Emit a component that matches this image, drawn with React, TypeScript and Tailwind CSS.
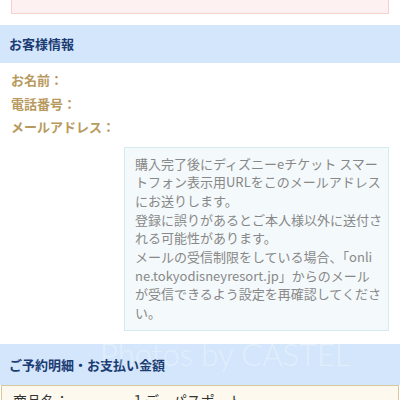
const noteLines = [
  '購入完了後にディズニーeチケット スマー',
  'トフォン表示用URLをこのメールアドレス',
  'にお送りします。',
  '登録に誤りがあるとご本人様以外に送付さ',
  'れる可能性があります。',
  'メールの受信制限をしている場合、「onli',
  'ne.tokyodisneyresort.jp」からのメール',
  'が受信できるよう設定を再確認してくださ',
  'い。',
];

function SectionHeader({
  title,
  className,
  children,
}: {
  title: string;
  className: string;
  children?: React.ReactNode;
}) {
  return (
    <div className={`relative flex items-center bg-[#d3e6fb] px-[9px] ${className}`}>
      <h2 className="text-[13px] font-bold text-[#1b3b73]">{title}</h2>
      {children}
    </div>
  );
}

export default function App() {
  return (
    <div
      className="w-[400px] h-[400px] overflow-hidden bg-white"
      style={{ fontFamily: '"Noto Sans CJK JP", "Noto Sans", sans-serif' }}
    >
      <div className="mx-[11px] h-[14px] border-x border-b border-[#f6cfcf] bg-[#fdf1f1]" />

      <SectionHeader title="お客様情報" className="mt-[11px] h-[38px]" />

      <div className="px-[11px] pt-[5px] text-[13px] font-bold leading-[23.5px] text-[#b89a5e]">
        <p>お名前：</p>
        <p>電話番号：</p>
        <p>メールアドレス：</p>
      </div>

      <div className="ml-[124px] mr-[11px] mt-[8px] border border-[#d6ebef] bg-[#f4f9fb] py-[7px] pl-[10px] text-[13px] leading-[18.7px] text-[#888888]">
        {noteLines.map((line) => (
          <span key={line} className="block whitespace-nowrap">
            {line}
          </span>
        ))}
      </div>

      <SectionHeader title="ご予約明細・お支払い金額" className="mt-[13px] h-[41px]">
        <span
          className="pointer-events-none absolute left-[100px] top-[-13px] text-[31px] font-light text-white/35 whitespace-nowrap"
          style={{ fontFamily: 'Lato, sans-serif' }}
        >
          Photos by CASTEL
        </span>
      </SectionHeader>

      <div className="mx-px border border-[#d8c99c] bg-[#fdf9ee] px-[11px] pt-[4px]">
        <div className="flex text-[14px] text-[#333333]">
          <span className="w-[118px]">商品名：</span>
          <span>１デーパスポート</span>
        </div>
      </div>
    </div>
  );
}
